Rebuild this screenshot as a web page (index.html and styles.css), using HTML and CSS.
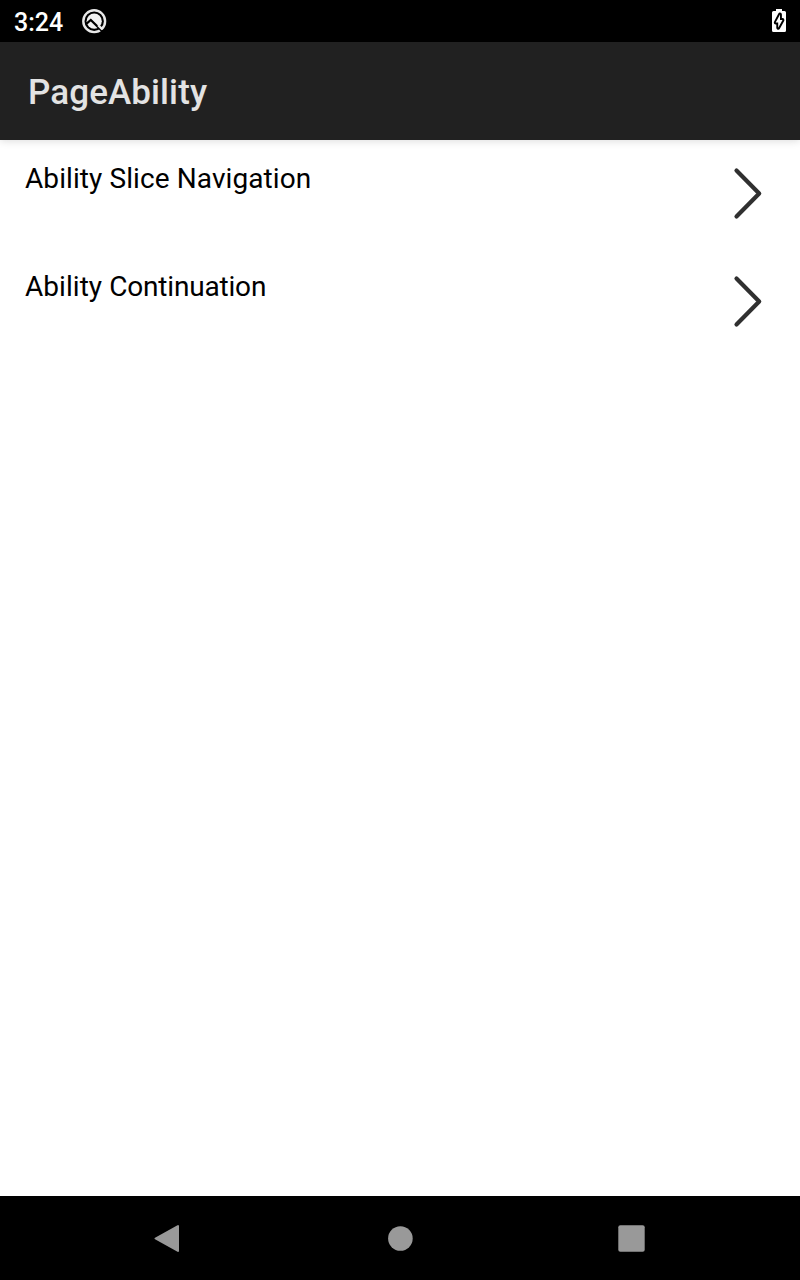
FILE: index.html
```html
<!DOCTYPE html>
<html lang="en">
<head>
<meta charset="utf-8">
<title>PageAbility</title>
<link rel="stylesheet" href="styles.css">
</head>
<body>
<div class="status-bar">
  <span class="clock">3:24</span>
  <svg class="system-icon" width="26" height="26" viewBox="0 0 26 26">
    <circle cx="13.2" cy="13.2" r="10.9" fill="none" stroke="#e8e8e8" stroke-width="2.4"/>
    <circle cx="13.2" cy="13.2" r="7.6" fill="#f2f2f2"/>
    <path d="M5 16.2L9.8 12L22.5 24.4" fill="none" stroke="#000" stroke-width="2.2"/>
    <path d="M17.2 17.2L21.5 21.5" stroke="#eee" stroke-width="2.4"/>
  </svg>
  <svg class="battery" width="14" height="24" viewBox="0 0 14 24">
    <path d="M4 0H10V2H12.5Q14 2 14 3.5V21.5Q14 23 12.5 23H1.5Q0 23 0 21.5V3.5Q0 2 1.5 2H4Z" fill="#fff"/>
    <path d="M8 5.5V11H10.5L6.2 18.8V13.6H3.7Z" fill="#fff" stroke="#000" stroke-width="3.8" stroke-linejoin="round" paint-order="stroke"/>
  </svg>
</div>
<header class="app-bar"><h1 class="title">PageAbility</h1></header>
<main class="list">
  <div class="row">
    <span class="label label-slice">Ability Slice Navigation</span>
    <svg class="chevron" width="30" height="54" viewBox="0 0 30 54"><path d="M3.5 3.5L26.2 26.5L3.5 49.5"/></svg>
  </div>
  <div class="row">
    <span class="label label-continuation">Ability <span class="word">Continuation</span></span>
    <svg class="chevron" width="30" height="54" viewBox="0 0 30 54"><path d="M3.5 3.5L26.2 26.5L3.5 49.5"/></svg>
  </div>
</main>
<nav class="nav-bar">
  <svg width="28" height="30" viewBox="0 0 28 30"><path d="M2.5 15.5L25 3V28Z" stroke="#999" stroke-width="2" stroke-linejoin="round"/></svg>
  <svg width="27" height="27" viewBox="0 0 27 27"><circle cx="14.4" cy="13.5" r="12.3"/></svg>
  <svg width="27" height="27" viewBox="0 0 27 27"><rect x=".3" y=".3" width="26.4" height="26.4" rx="2"/></svg>
</nav>
</body>
</html>
```
FILE: styles.css
```css
* { box-sizing: border-box; }
body {
  margin: 0;
  height: 1280px;
  display: flex;
  flex-direction: column;
  background: #fff;
  font-family: Roboto, sans-serif;
  overflow: hidden;
}
svg { display: block; flex: none; }
.status-bar {
  height: 42px;
  display: flex;
  align-items: flex-start;
  padding: 8px 14px 0 14px;
  background: #000;
  color: #fff;
}
.clock {
  width: 67px;
  font-size: 25px;
  font-weight: 500;
  line-height: 30px;
}
.battery { margin: 1px 0 0 auto; }
.app-bar {
  height: 98px;
  display: flex;
  align-items: center;
  padding: 4px 28px 0;
  background: #212121;
  box-shadow: 0 1px 8px rgba(0, 0, 0, .14);
}
.title {
  margin: 0;
  font-size: 35px;
  font-weight: 500;
  line-height: 42px;
  letter-spacing: .1px;
  color: #e3e3e3;
}
.list { flex: 1; }
.row {
  height: 108px;
  display: flex;
  justify-content: space-between;
  align-items: flex-start;
  padding: 22px 37px 0 25px;
}
.label {
  font-size: 28px;
  line-height: 33px;
  color: #000;
}
.label-slice { letter-spacing: .09px; }
.label-continuation { letter-spacing: .05px; }
.word { letter-spacing: -.18px; }
.chevron {
  margin-top: 5px;
  fill: none;
  stroke: #303030;
  stroke-width: 4.2;
  stroke-linecap: round;
  stroke-linejoin: round;
}
.nav-bar {
  height: 84px;
  display: flex;
  justify-content: space-between;
  align-items: center;
  padding: 0 155px 0 153px;
  background: #000;
  fill: #999;
}
```
